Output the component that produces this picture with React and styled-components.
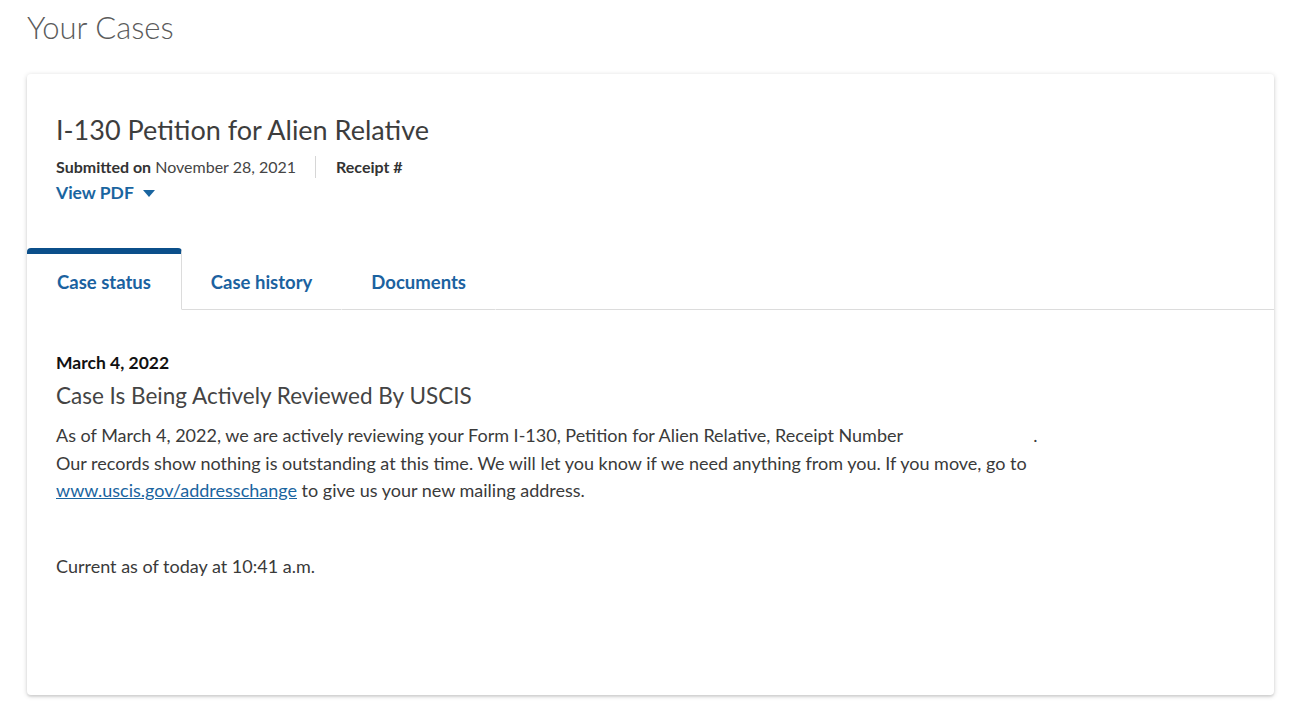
import styled, { createGlobalStyle } from "styled-components";

const GlobalStyle = createGlobalStyle`
  body {
    margin: 0;
    background: #ffffff;
    font-family: Lato, "Noto Sans", sans-serif;
    color: #333333;
  }
`;

const Page = styled.main`
  padding: 8px 26px 18px 27px;
`;

const PageTitle = styled.h1`
  margin: 0 0 28px;
  font-weight: 300;
  font-size: 31px;
  line-height: 38px;
  color: #5b5b5b;
`;

const Card = styled.section`
  background: #fff;
  border-radius: 4px;
  box-shadow: 0 1px 5px rgba(0, 0, 0, 0.18), 0 2px 2px rgba(0, 0, 0, 0.08);
  min-height: 621px;
`;

const CardHeader = styled.header`
  padding: 40px 29px 44px;
`;

const CaseTitle = styled.h2`
  margin: 0 0 10px;
  font-weight: 400;
  font-size: 27px;
  line-height: 32px;
  color: #3d3d3d;
`;

const Meta = styled.div`
  display: flex;
  align-items: center;
  font-size: 16px;
  line-height: 22px;
  color: #454545;
`;

const MetaItem = styled.span`
  padding-right: ${({ $last }) => ($last ? 0 : "19px")};
  margin-right: ${({ $last }) => ($last ? 0 : "20px")};
  border-right: ${({ $last }) => ($last ? "none" : "1px solid #d6d6d6")};
  b {
    font-weight: 700;
    color: #333;
  }
`;

const PdfToggle = styled.button`
  display: inline-flex;
  align-items: center;
  gap: 9px;
  margin-top: 4px;
  padding: 0;
  border: 0;
  background: none;
  font-family: inherit;
  font-size: 17.5px;
  font-weight: 700;
  line-height: 22px;
  color: #1a65a0;
  cursor: pointer;
`;

const Caret = styled.span`
  width: 0;
  height: 0;
  border-left: 6px solid transparent;
  border-right: 6px solid transparent;
  border-top: 7px solid #1a65a0;
`;

const TabBar = styled.nav`
  display: flex;
  align-items: flex-end;
  border-bottom: 1px solid #dcdcdc;
`;

const Tab = styled.button`
  margin-bottom: -1px;
  padding: 0 ${({ $active }) => ($active ? "30px" : "29px")};
  height: 62px;
  border: 0;
  border-top: 6px solid ${({ $active }) => ($active ? "#0b4f8a" : "transparent")};
  border-right: 1px solid ${({ $active }) => ($active ? "#dcdcdc" : "transparent")};
  border-bottom: 1px solid ${({ $active }) => ($active ? "#fff" : "#dcdcdc")};
  border-radius: ${({ $active }) => ($active ? "4px 4px 0 0" : "0")};
  background: #fff;
  font-family: inherit;
  font-size: 18.5px;
  font-weight: 700;
  color: #1b62a0;
  cursor: pointer;
`;

const Body = styled.div`
  padding: 41px 29px 40px;
`;

const StatusDate = styled.div`
  font-size: 17.5px;
  font-weight: 700;
  line-height: 24px;
  color: #111;
`;

const StatusTitle = styled.h3`
  margin: 7px 0 12px;
  font-weight: 400;
  font-size: 22.5px;
  line-height: 28px;
  color: #444;
`;

const Text = styled.p`
  margin: 0;
  max-width: 1050px;
  font-size: 18px;
  line-height: 27.5px;
  color: #3a3a3a;
  a {
    color: #1a65a0;
    text-decoration: underline;
  }
`;

const Blank = styled.span`
  display: inline-block;
  width: 126px;
`;

const Updated = styled(Text)`
  margin-top: 48px;
`;

export default function App() {
  return (
    <>
      <GlobalStyle />
      <Page>
        <PageTitle>Your Cases</PageTitle>
        <Card>
          <CardHeader>
            <CaseTitle>I-130 Petition for Alien Relative</CaseTitle>
            <Meta>
              <MetaItem>
                <b>Submitted on</b> November 28, 2021
              </MetaItem>
              <MetaItem $last>
                <b>Receipt #</b>
              </MetaItem>
            </Meta>
            <PdfToggle>
              View PDF <Caret />
            </PdfToggle>
          </CardHeader>
          <TabBar>
            <Tab $active>Case status</Tab>
            <Tab>Case history</Tab>
            <Tab>Documents</Tab>
          </TabBar>
          <Body>
            <StatusDate>March 4, 2022</StatusDate>
            <StatusTitle>Case Is Being Actively Reviewed By USCIS</StatusTitle>
            <Text>
              As of March 4, 2022, we are actively reviewing your Form I-130, Petition for Alien
              Relative, Receipt Number <Blank />.
              <br />
              Our records show nothing is outstanding at this time. We will let you know if we need
              anything from you. If you move, go to
              <br />
              <a href="#">www.uscis.gov/addresschange</a> to give us your new mailing address.
            </Text>
            <Updated>Current as of today at 10:41 a.m.</Updated>
          </Body>
        </Card>
      </Page>
    </>
  );
}
